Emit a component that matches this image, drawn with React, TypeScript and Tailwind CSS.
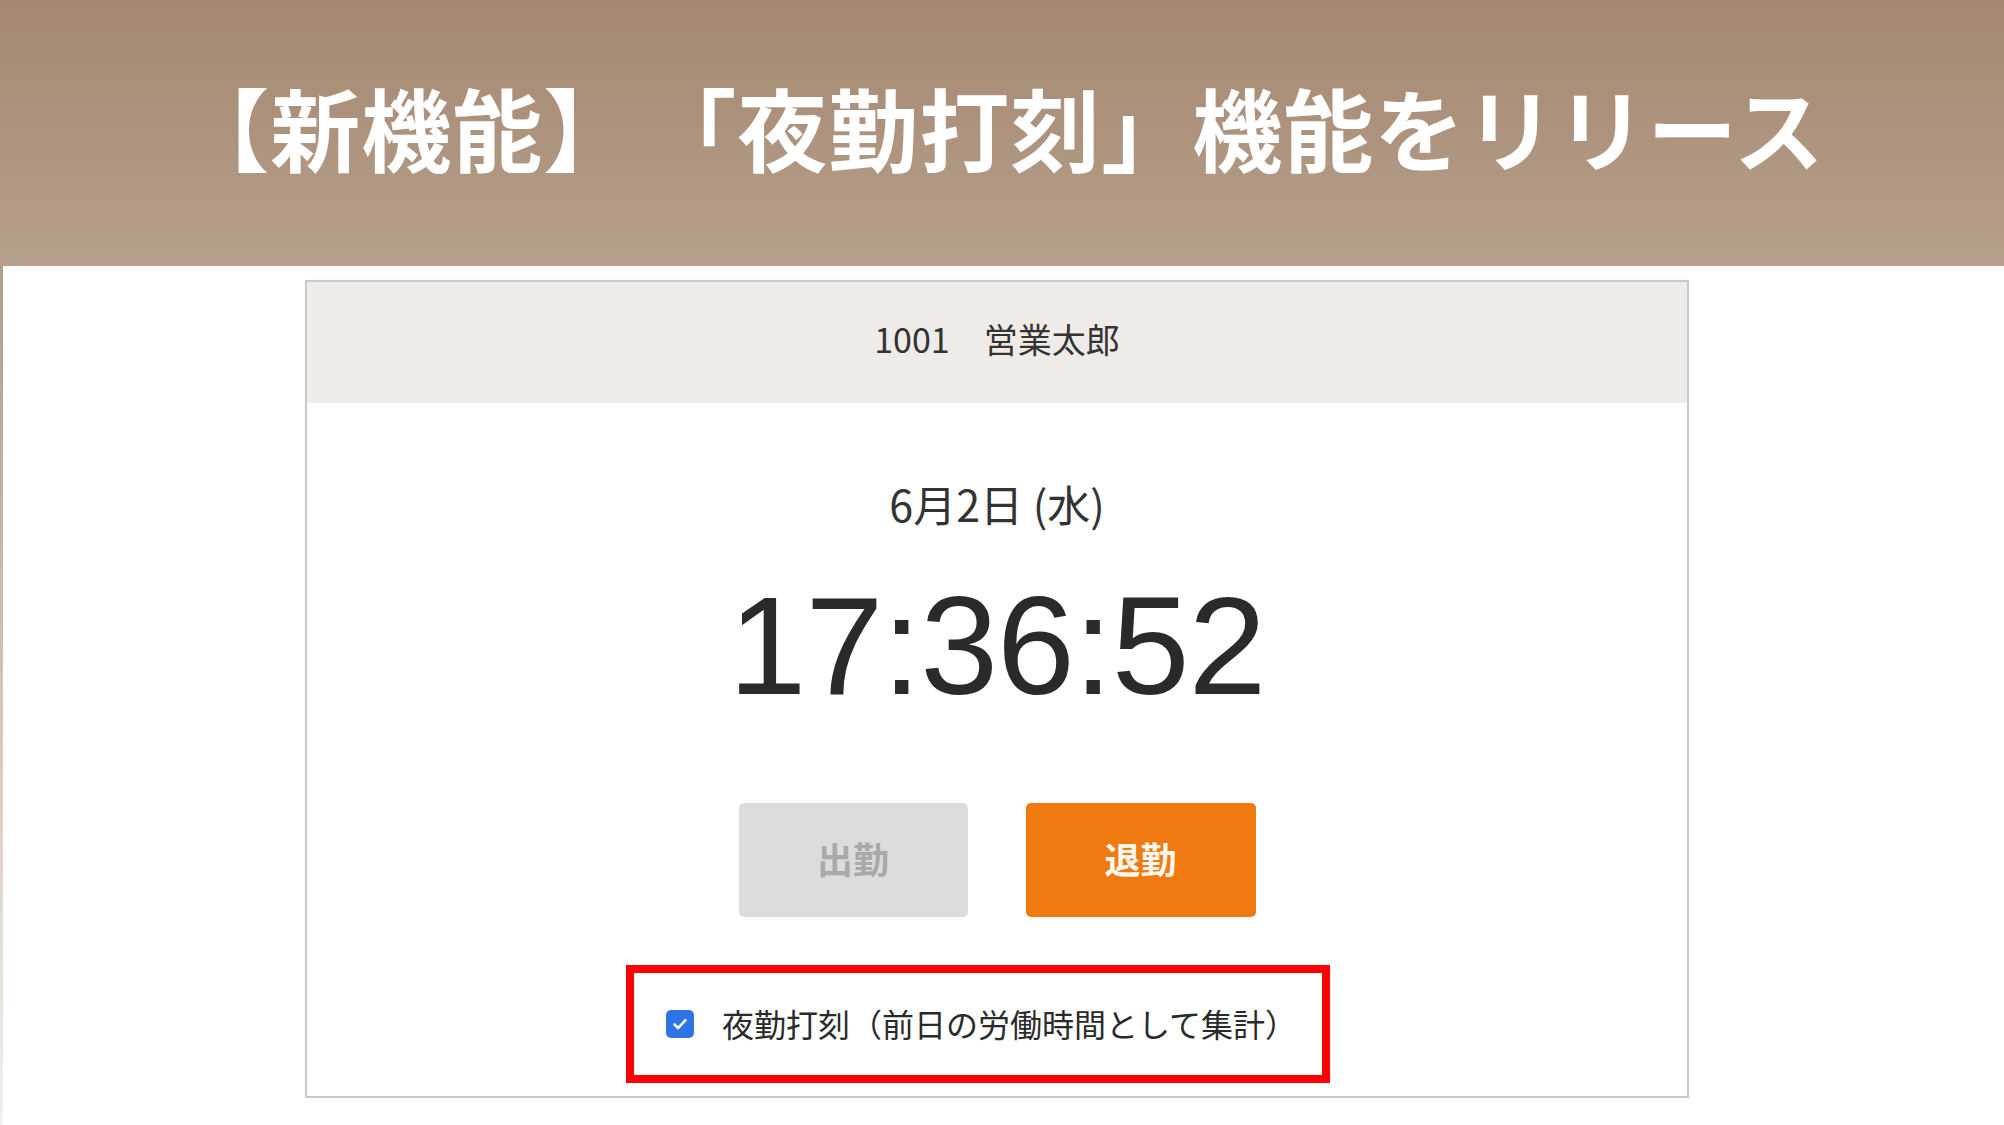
import React from 'react';

const jp = '"Noto Sans CJK JP", "Noto Sans", sans-serif';

function Banner() {
  return (
    <div className="h-[266px] w-full flex items-center justify-center bg-gradient-to-b from-[#a48870] to-[#b69f8c]">
      <h1
        className="text-[90px] font-bold text-white leading-none tracking-[1px] pb-[14px] whitespace-nowrap"
        style={{ fontFamily: jp }}
      >
        【新機能】<span className="inline-block w-[12px]" />「夜勤打刻」機能をリリース
      </h1>
    </div>
  );
}

function NightCheck() {
  return (
    <div className="ml-[319px] mt-[48px] w-[704px] h-[118px] border-[8px] border-[#ff0000] flex items-center pl-[32px]">
      <span className="w-[28px] h-[28px] rounded-[5px] bg-[#2f74e4] flex items-center justify-center shrink-0">
        <svg width="20" height="20" viewBox="0 0 20 20" fill="none">
          <path d="M4.5 10.5l3.6 3.6 7.4-8" stroke="white" strokeWidth="2.6" strokeLinecap="round" strokeLinejoin="round" />
        </svg>
      </span>
      <span className="ml-[28px] pb-[3px] text-[32px] text-[#2a2a2a] leading-none whitespace-nowrap" style={{ fontFamily: jp }}>
        夜勤打刻（前日の労働時間として集計）
      </span>
    </div>
  );
}

function PunchCard() {
  return (
    <div className="ml-[302px] mt-[14px] w-[1384px] border-2 border-[#cbc8c7] bg-white shadow-[0_0_2px_rgba(0,0,0,0.06)]">
      <div className="h-[121px] bg-[#efebe8] flex items-center justify-center pb-[8px]">
        <span className="text-[34px] text-[#333] whitespace-pre" style={{ fontFamily: jp }}>
          1001　営業太郎
        </span>
      </div>
      <div className="flex flex-col pb-[13px]">
        <div className="pt-[70px] text-center text-[43px] leading-[60px] text-[#333]" style={{ fontFamily: jp }}>
          6月2日 (水)
        </div>
        <div
          className="mt-[43px] text-center text-[140px] leading-none text-[#2a2a2a] tracking-[-1px]"
          style={{ fontFamily: '"Liberation Sans", Arial, sans-serif' }}
        >
          17:36:52
        </div>
        <div className="mt-[87px] flex justify-center gap-[58px]">
          <button
            className="w-[229px] h-[114px] rounded-[5px] bg-[#dcdcdc] text-[#a9a9a9] text-[36px] font-bold flex items-center justify-center pb-[5px]"
            style={{ fontFamily: jp }}
          >
            出勤
          </button>
          <button
            className="w-[230px] h-[114px] rounded-[5px] bg-[#ee7a10] text-[#fdf6ee] text-[36px] font-bold flex items-center justify-center pb-[5px]"
            style={{ fontFamily: jp }}
          >
            退勤
          </button>
        </div>
        <NightCheck />
      </div>
    </div>
  );
}

export default function App() {
  return (
    <div className="w-[2004px] h-[1125px] bg-white overflow-hidden flex flex-col">
      <Banner />
      <div className="flex flex-1">
        <div className="w-[3px] bg-gradient-to-b from-[#b39b88] to-[#f4f0ee]" />
        <div className="flex-1">
          <PunchCard />
        </div>
      </div>
    </div>
  );
}
